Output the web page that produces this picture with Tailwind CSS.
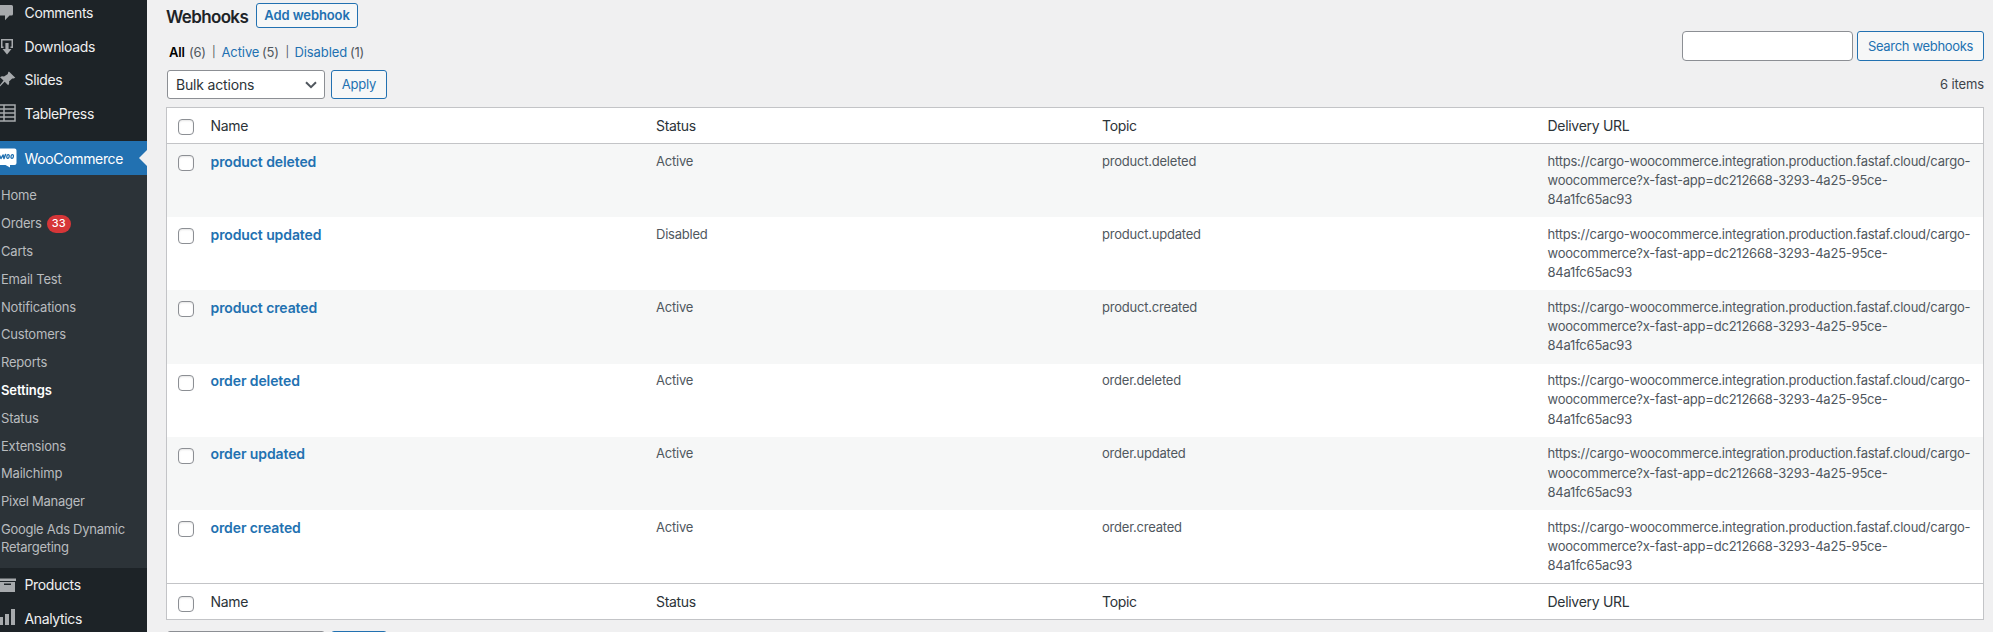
<!DOCTYPE html>
<html lang="en">
<head>
<meta charset="utf-8">
<title>Webhooks</title>
<script src="https://cdn.jsdelivr.net/npm/@tailwindcss/browser@4"></script>
</head>
<body class="flex h-[632px] w-[1993px] overflow-hidden bg-[#f0f0f1] font-[Inter,sans-serif] text-[13px] tracking-[-0.22px] text-[#50575e]">
<aside class="flex h-[632px] w-[147px] shrink-0 flex-col overflow-hidden bg-[#1d2327] text-[14px] tracking-[-0.35px] text-[#f0f0f1]">
  <a class="mt-[-4px] flex h-[33.7px] shrink-0 items-center"><svg class="w-[24.5px] shrink-0 text-[#a7aaad]" height="20" viewBox="0 0 24.5 20" fill="currentColor"><path d="M0 2h11.500q1.500 0 1.500 1.500v7.500q0 1.500-1.500 1.500H9.500L5 17.300V12.500H0z"/></svg>Comments</a>
  <a class="flex h-[33.7px] shrink-0 items-center"><svg class="w-[24.5px] shrink-0 text-[#a7aaad]" height="20" viewBox="0 0 24.5 20" fill="currentColor"><path d="M1 2h12v9h-2.500V9.500h1V3.500h-9v6h1V11H1z"/><path d="M5.400 6h3.200v6h2.900L7 17.500 2.500 12h2.900z"/></svg>Downloads</a>
  <a class="flex h-[33.2px] shrink-0 items-center"><svg class="w-[24.5px] shrink-0 text-[#a7aaad]" height="20" viewBox="0 0 24.5 20" fill="currentColor"><path d="M8.900 1.600 15.300 7.800 13.500 8.600 12.200 8.400 9 11.600Q9.700 13.600 8.200 15.300L4.700 11.800 0 16.600-1 16.300 3.500 10.600 0 7.200Q1.700 5.700 4 6.500L7.900 4.100Q7.600 2.600 8.900 1.600z"/></svg>Slides</a>
  <a class="flex h-[33.7px] shrink-0 items-center"><svg class="w-[24.5px] shrink-0 text-[#a7aaad]" height="20" viewBox="0 0 24.5 20" fill="none" stroke="currentColor" stroke-width="1.500"><path d="M-3 2H15V18H-3M0 6H15M0 10H15M0 14H15M4 2V18"/></svg>TablePress</a>
  <a class="relative mt-[11px] flex h-[33.8px] shrink-0 items-center bg-[#2271b1] text-white"><svg class="w-[24.5px] shrink-0" height="20" viewBox="0 0 24.5 20"><path fill="#fff" d="M0 .5h14.500q2 0 2 2v12.500q0 2-2 2H10V19.500L5.500 17H0z"/><path fill="none" stroke="#2271b1" stroke-width="1.500" stroke-linecap="round" stroke-linejoin="round" d="M-1 6.500 1 10.500 3 7 4 10.500 5.500 6.500"/><ellipse cx="8" cy="8.500" rx="1.200" ry="1.900" transform="rotate(15 8 8.500)" fill="none" stroke="#2271b1" stroke-width="1.300"/><ellipse cx="12.200" cy="8.500" rx="1.200" ry="1.900" transform="rotate(15 12.200 8.500)" fill="none" stroke="#2271b1" stroke-width="1.300"/></svg>WooCommerce<span class="absolute top-[9px] right-0 border-y-8 border-r-8 border-y-transparent border-r-[#f0f0f1]"></span></a>
  <div class="h-[393px] shrink-0 bg-[#2c3338] pt-[7.3px] pl-px text-[13px] leading-[17.8px] tracking-[-0.2px] text-[#b9bcbf]">
    <div class="h-[27.8px] py-[5px]">Home</div>
    <div class="flex h-[27.8px] items-center">Orders<span class="ml-[5px] flex h-[18px] w-[24px] items-center justify-center rounded-full bg-[#d63638] text-[11px] font-medium tracking-normal text-white">33</span></div>
    <div class="h-[27.8px] py-[5px]">Carts</div>
    <div class="h-[27.8px] py-[5px]">Email Test</div>
    <div class="h-[27.8px] py-[5px]">Notifications</div>
    <div class="h-[27.8px] py-[5px]">Customers</div>
    <div class="h-[27.8px] py-[5px]">Reports</div>
    <div class="h-[27.8px] py-[5px] font-semibold tracking-[-0.1px] text-white">Settings</div>
    <div class="h-[27.8px] py-[5px]">Status</div>
    <div class="h-[27.8px] py-[5px]">Extensions</div>
    <div class="h-[27.8px] py-[5px]">Mailchimp</div>
    <div class="h-[27.8px] py-[5px] tracking-[-0.27px]">Pixel Manager</div>
    <div class="py-[5px] tracking-[-0.27px]">Google Ads Dynamic<br>Retargeting</div>
  </div>
  <a class="flex h-[33.2px] shrink-0 items-center"><svg class="w-[24.5px] shrink-0 text-[#a7aaad]" height="20" viewBox="0 0 24.5 20" fill="currentColor"><path d="M0 3.500h16v2.500H0z"/><path fill-rule="evenodd" d="M0 7h15v10H0zM4 8.500v1.500h7V8.500z"/></svg>Products</a>
  <a class="flex h-[33.7px] shrink-0 items-center"><svg class="w-[24.5px] shrink-0 text-[#a7aaad]" height="20" viewBox="0 0 24.5 20" fill="currentColor"><path d="M-1 9h4v8h-4zM5 6h4v11H5zM11 1h4v16h-4z"/></svg>Analytics</a>
</aside>
<main class="ml-[19px] flex w-[1818px] shrink-0 flex-col pt-[3px]">
  <div class="flex h-[25px] shrink-0 items-center">
    <h1 class="w-[90px] pt-[4px] text-[17px] font-semibold tracking-[-0.65px] text-[#1d2327]">Webhooks</h1>
    <a class="flex h-[25px] w-[102px] items-center justify-center rounded-[3px] border border-[#2271b1] bg-[#f6f7f7] text-[13px] font-semibold tracking-[-0.1px] text-[#2271b1]">Add webhook</a>
  </div>
  <div class="flex h-[40px] shrink-0 justify-between">
    <ul class="flex pt-[15px] pl-[3px] leading-[19px]">
      <li class="flex w-[52.5px]"><span class="w-[20px] font-semibold text-black">All</span><span class="w-[23px]">(6)</span><span class="text-[11px]">|</span></li>
      <li class="flex w-[73px]"><span class="w-[40.5px] tracking-[-0.1px] text-[#2271b1]">Active</span><span class="w-[23.5px]">(5)</span><span class="text-[11px]">|</span></li>
      <li class="flex"><span class="w-[55.5px] tracking-[-0.1px] text-[#2271b1]">Disabled</span>(1)</li>
    </ul>
    <div class="flex gap-[4px] pt-[3px]">
      <div class="h-[30px] w-[171px] rounded-[4px] border border-[#8c8f94] bg-white"></div>
      <a class="flex h-[30px] w-[127px] items-center justify-center rounded-[3px] border border-[#2271b1] bg-[#f6f7f7] pt-px tracking-[-0.33px] text-[#2271b1]">Search webhooks</a>
    </div>
  </div>
  <div class="flex h-[39px] shrink-0 items-start justify-between pt-[2px]">
    <div class="flex gap-[6px] pl-px">
      <div class="flex h-[29px] w-[158px] items-center justify-between rounded-[3px] border border-[#8c8f94] bg-white pr-[7px] pl-[8px] text-[14px] tracking-[-0.17px] text-[#2c3338]">Bulk actions<svg width="12" height="8" viewBox="0 0 12 8" fill="none" stroke="#50575e" stroke-width="2"><path d="M1 1.300 6 6.200 11 1.300"/></svg></div>
      <a class="flex h-[29px] w-[56px] items-center justify-center rounded-[3px] border border-[#2271b1] bg-[#f6f7f7] text-[#2271b1]">Apply</a>
    </div>
    <span class="pt-[5px] tracking-[-0.1px] text-[#3c434a]">6 items</span>
  </div>
  <div id="table" class="h-[513px] w-full shrink-0 border border-[#c3c4c7] bg-white"></div>
  <div class="mt-[11px] flex shrink-0 gap-[6px] pl-px">
    <div class="h-[29px] w-[158px] rounded-[3px] border border-[#8c8f94] bg-white"></div>
    <div class="h-[29px] w-[56px] rounded-[3px] border border-[#2271b1] bg-[#f6f7f7]"></div>
  </div>
</main>
<script>
const box = '<span class="block size-4 rounded-[4px] border border-[#8c8f94] bg-white shadow-[inset_0_1px_2px_rgba(0,0,0,0.1)]"></span>';
const heading = edge => `<div class="grid grid-cols-[43.5px_445.5px_446px_445.5px_1fr] items-center text-[14px] leading-[19px] tracking-[-0.3px] text-[#2c3338] ${edge}"><span class="pt-[4px] pl-[11px]">${box}</span><span>Name</span><span>Status</span><span>Topic</span><span>Delivery URL</span></div>`;
const hooks = [['product deleted','Active'],['product updated','Disabled'],['product created','Active'],['order deleted','Active'],['order updated','Active'],['order created','Active']];
document.getElementById('table').innerHTML = heading('h-[36px] pb-px border-b border-[#c3c4c7]') +
  hooks.map(([name, status]) => `<div class="grid h-[73.2px] grid-cols-[43.5px_445.5px_446px_445.5px_1fr] pt-[7.7px] leading-[19.2px] odd:bg-white even:bg-[#f6f7f7]"><span class="pt-[3.3px] pl-[11px]">${box}</span><span class="text-[14px] font-semibold tracking-[-0.1px] text-[#2271b1]">${name}</span><span>${status}</span><span>${name.replace(' ', '.')}</span><span class="whitespace-nowrap">https://cargo-woocommerce.integration.production.fastaf.cloud/cargo-<br>woocommerce?x-fast-app=dc212668-3293-4a25-95ce-<br>84a1fc65ac93</span></div>`).join('') +
  heading('h-[35.8px] border-t border-[#c3c4c7]');
</script>
</body>
</html>
